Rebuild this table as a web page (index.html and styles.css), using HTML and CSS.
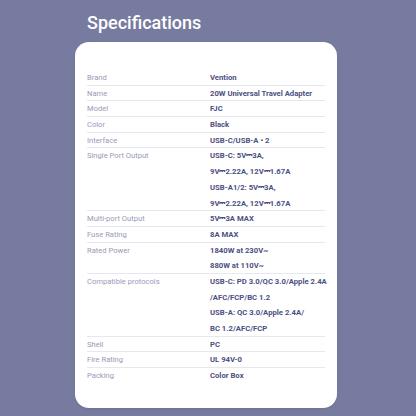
FILE: index.html
```html
<!DOCTYPE html>
<html>
<head>
<meta charset="utf-8">
<link rel="stylesheet" href="styles.css">
</head>
<body>
<div class="wrap">
  <h1 class="title">Specifications</h1>
  <div class="card">
    <div class="row"><div class="k">Brand</div><div class="v">Vention</div></div>
    <div class="row"><div class="k">Name</div><div class="v">20W Universal Travel Adapter</div></div>
    <div class="row"><div class="k">Model</div><div class="v">FJC</div></div>
    <div class="row"><div class="k">Color</div><div class="v">Black</div></div>
    <div class="row"><div class="k">Interface</div><div class="v">USB-C/USB-A • 2</div></div>
    <div class="row"><div class="k">Single Port Output</div><div class="v">USB-C: 5V<span class="dc">⎓</span>3A,<br>9V<span class="dc">⎓</span>2.22A, 12V<span class="dc">⎓</span>1.67A<br>USB-A1/2: 5V<span class="dc">⎓</span>3A,<br>9V<span class="dc">⎓</span>2.22A, 12V<span class="dc">⎓</span>1.67A</div></div>
    <div class="row"><div class="k">Multi-port Output</div><div class="v">5V<span class="dc">⎓</span>3A MAX</div></div>
    <div class="row"><div class="k">Fuse Rating</div><div class="v">8A MAX</div></div>
    <div class="row"><div class="k">Rated Power</div><div class="v">1840W at 230V~<br>880W at 110V~</div></div>
    <div class="row"><div class="k">Compatible protocols</div><div class="v">USB-C: PD 3.0/QC 3.0/Apple 2.4A<br>/AFC/FCP/BC 1.2<br>USB-A: QC 3.0/Apple 2.4A/<br>BC 1.2/AFC/FCP</div></div>
    <div class="row"><div class="k">Shell</div><div class="v">PC</div></div>
    <div class="row"><div class="k">Fire Rating</div><div class="v">UL 94V-0</div></div>
    <div class="row last"><div class="k">Packing</div><div class="v">Color Box</div></div>
  </div>
</div>
</body>
</html>
```
FILE: styles.css
```css
html, body {
  margin: 0;
  padding: 0;
  background: #767b9f;
  font-family: Roboto, "Liberation Sans", sans-serif;
}
body {
  width: 416px;
  height: 416px;
  overflow: hidden;
}
.wrap {
  margin-left: 75px;
  width: 262px;
  padding-top: 12px;
}
.title {
  margin: 0;
  padding-left: 12px;
  font-size: 18px;
  line-height: 22px;
  font-weight: 500;
  color: #ffffff;
}
.card {
  margin-top: 8px;
  background: #ffffff;
  border-radius: 14px;
  padding: 28px 12px 24px 12px;
  box-shadow: 0 1px 2px rgba(60, 64, 100, 0.15);
}
.row {
  display: flex;
  line-height: 15.68px;
  box-shadow: inset 0 -1px 0 #e7e8ef;
}
.row.last {
  box-shadow: none;
}
.k {
  width: 123px;
  flex: none;
  font-size: 7.6px;
  color: #989bb7;
}
.v {
  flex: 1;
  font-size: 7.7px;
  font-weight: 700;
  color: #4b5082;
  white-space: nowrap;
}
.dc {
  font-family: "DejaVu Sans", sans-serif;
  font-weight: 400;
}
```
